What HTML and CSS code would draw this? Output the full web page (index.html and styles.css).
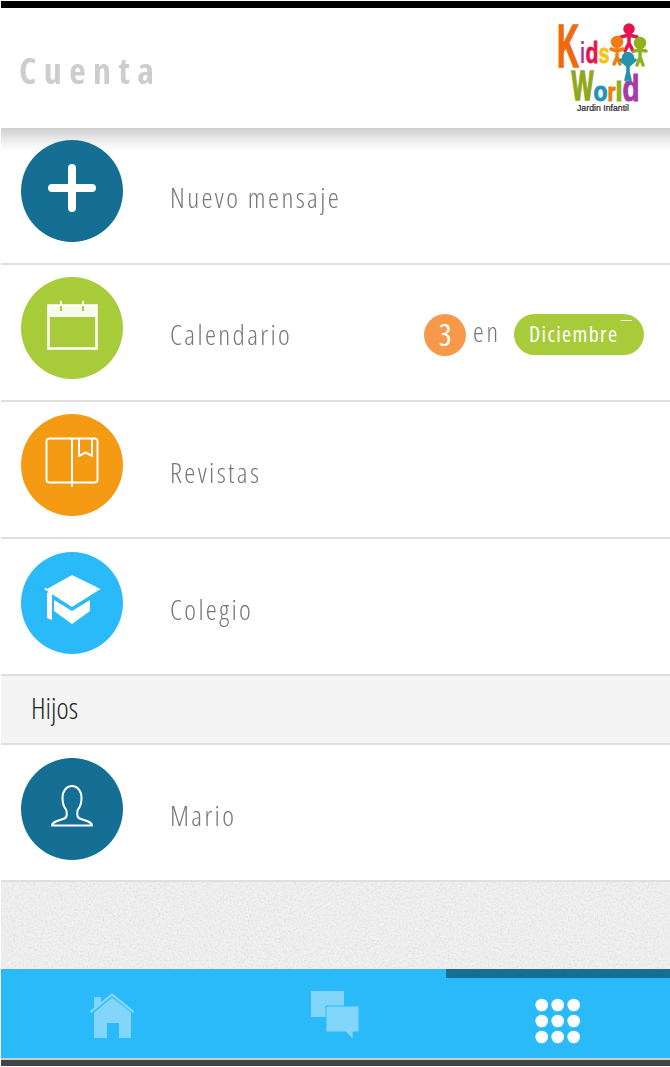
FILE: index.html
```html
<!DOCTYPE html>
<html lang="es">
<head>
<meta charset="utf-8">
<title>Cuenta</title>
<link rel="stylesheet" href="styles.css">
</head>
<body>
<div class="page">
  <div class="statusbar"></div>
  <header class="header">
    <h1 class="title">Cuenta</h1>
    <svg class="logo" viewBox="556 16 94 100" width="94" height="100">
      <text class="logo-word"><tspan x="557" y="67" font-size="62" textLength="22" lengthAdjust="spacingAndGlyphs" fill="#ee6a0c" stroke="#ee6a0c" stroke-width="1.500">K</tspan><tspan x="580" y="63" font-size="29" textLength="5" lengthAdjust="spacingAndGlyphs" fill="#a63a9e">i</tspan><tspan x="585.500" y="63" font-size="30" textLength="13" lengthAdjust="spacingAndGlyphs" fill="#e4144f" stroke="#e4144f" stroke-width="0.800">d</tspan><tspan x="598.500" y="63" font-size="28" textLength="11" lengthAdjust="spacingAndGlyphs" fill="#f7c30f" stroke="#f7c30f" stroke-width="0.800">s</tspan></text>
      <text class="logo-word"><tspan x="571.500" y="100" font-size="42" textLength="22" lengthAdjust="spacingAndGlyphs" fill="#8fa81a" stroke="#8fa81a" stroke-width="1.500">W</tspan><tspan x="593.500" y="101" font-size="27" textLength="14" lengthAdjust="spacingAndGlyphs" fill="#2293bd" stroke="#2293bd">o</tspan><tspan x="607.500" y="101" font-size="26" textLength="8" lengthAdjust="spacingAndGlyphs" fill="#ee7a14" stroke="#ee7a14">r</tspan><tspan x="615.500" y="101" font-size="28" textLength="7" lengthAdjust="spacingAndGlyphs" fill="#8fb21a" stroke="#8fb21a">l</tspan><tspan x="622.500" y="101" font-size="36" textLength="17" lengthAdjust="spacingAndGlyphs" fill="#a83aa8" stroke="#a83aa8">d</tspan></text>
      <g class="fig" stroke="#e4144f" fill="none"><circle cx="629" cy="29" r="4" fill="#e4144f"/><path d="M621 37l8-2 8 2M629 36v8M629 43l-4 8M629 43l4 8"/></g>
      <g class="fig" stroke="#f07d14" fill="none"><circle cx="617" cy="42" r="4.500" fill="#f07d14"/><path d="M611 49l6 2 6-2M617 49v9M617 57l-3 7M617 57l3 7"/></g>
      <g class="fig" stroke="#8fb21a" fill="none"><circle cx="640" cy="43" r="4.500" fill="#8fb21a"/><path d="M634 51l6-1 6 1M640 49v9M640 57l-3 8M640 57l3 8"/></g>
      <g class="fig" stroke="#2293a8" fill="none"><circle cx="628" cy="58" r="4.500" fill="#2293a8"/><path d="M621 60l7 6 7-6M628 64v9M628 72l-2 8M628 72l2 8"/></g>
      <text class="logo-sub" x="577" y="111" textLength="52" lengthAdjust="spacingAndGlyphs">Jardin Infantil</text>
    </svg>
  </header>

  <a class="row row-first">
    <span class="disc disc-teal">
      <svg viewBox="0 0 102 102"><path class="plus" d="M51 28v40M31 48h40"/></svg>
    </span>
    <span class="label">Nuevo mensaje</span>
  </a>

  <a class="row">
    <span class="disc disc-green">
      <svg viewBox="0 0 102 102"><rect class="band" x="27" y="28" width="49" height="12"/><rect class="line" x="27.500" y="28.500" width="48" height="43"/><path class="line thin" d="M40 24v5M62 24v5"/><path class="ring" d="M40 29v5M62 29v5"/></svg>
    </span>
    <span class="label">Calendario</span>
    <span class="extra">
      <span class="count">3</span>
      <span class="en">en</span>
      <span class="pill">Diciembre<i class="pill-dash"></i></span>
    </span>
  </a>

  <a class="row">
    <span class="disc disc-orange">
      <svg viewBox="0 0 102 102"><path class="line round book" d="M51 25v47M28.500 24.500h45a3 3 0 0 1 3 3v38a3 3 0 0 1-3 3h-45a3 3 0 0 1-3-3v-38a3 3 0 0 1 3-3zM58 25v17l6.500-3.500 6.500 3.500V25"/></svg>
    </span>
    <span class="label label-low">Revistas</span>
  </a>

  <a class="row row-low">
    <span class="disc disc-sky">
      <svg viewBox="0 0 102 102"><path class="solid" d="M51 23 79.500 37 51 55 23 37l3-1.500V37zM26 41l5-2v29l-5-2zM33 48l18 11 18-11v11L51 72 33 59z"/></svg>
    </span>
    <span class="label">Colegio</span>
  </a>

  <div class="section">Hijos</div>

  <a class="row row-low">
    <span class="disc disc-teal">
      <svg viewBox="0 0 102 102"><path class="line thin round" d="M31 67.500h40c0-4-7-5-12.500-7-3-1-2.500-7-1.500-9 2-2.500 3.500-7 3.500-11.500 0-7-4-12-9.500-12s-9.500 5-9.500 12c0 4.500 1.500 9 3.500 11.500 1 2 1.500 8-1.500 9-5.500 2-12.500 3-12.500 7z"/></svg>
    </span>
    <span class="label">Mario</span>
  </a>

  <div class="texture">
    <svg class="texture-svg" width="100%" height="100%">
      <filter id="grain"><feTurbulence type="fractalNoise" baseFrequency="0.55" numOctaves="3" seed="4"/><feColorMatrix type="matrix" values="0 0 0 0 0.6  0 0 0 0 0.6  0 0 0 0 0.6  0.7 0.7 0 0 -0.62"/></filter>
      <rect width="100%" height="100%" filter="url(#grain)"/>
    </svg>
  </div>

  <nav class="nav">
    <a class="nav-cell">
      <svg viewBox="87 991 50 50" width="50" height="50"><path class="nav-icon" d="M94 1012.500 112 997.500l19 15V1038h-12v-15h-12v15H94zM94 997h7v6l-7 6z"/><path class="nav-roof" d="M90.500 1012 112 994.500 133.500 1012"/></svg>
    </a>
    <a class="nav-cell">
      <svg viewBox="310 991 50 50" width="50" height="50"><path class="nav-icon" d="M311 991h33v26h-33z"/><path class="nav-icon nav-front" d="M326 1006h33v26h-6v8l-7-8h-20z"/></svg>
    </a>
    <a class="nav-cell nav-cell-active">
      <svg viewBox="533 996 50 50" width="50" height="50">
        <g class="dots">
          <circle cx="541.700" cy="1005" r="6.300"/><circle cx="557.700" cy="1005" r="6.300"/><circle cx="573.700" cy="1005" r="6.300"/>
          <circle cx="541.700" cy="1021" r="6.300"/><circle cx="557.700" cy="1021" r="6.300"/><circle cx="573.700" cy="1021" r="6.300"/>
          <circle cx="541.700" cy="1037" r="6.300"/><circle cx="557.700" cy="1037" r="6.300"/><circle cx="573.700" cy="1037" r="6.300"/>
        </g>
      </svg>
    </a>
  </nav>
  <div class="bottom-bar"></div>
</div>
</body>
</html>
```

FILE: styles.css
```css
* { box-sizing: border-box; }
html, body { margin: 0; padding: 0; background: #fff; }
body { font-family: "Open Sans", "Liberation Sans", sans-serif; }
.page { width: 670px; height: 1067px; padding: 1px 0 0 1px; overflow: hidden; display: flex; flex-direction: column; }
.statusbar { height: 7px; background: #000; flex: none; }
.header { height: 120px; flex: none; display: flex; align-items: flex-start; justify-content: space-between; padding: 8px 20px 0 18px; background: #fff; }
.title { margin: 37px 0 0; font-size: 36px; line-height: 1; font-weight: 700; font-stretch: 75%; letter-spacing: 7.400px; color: #cdcdcd; will-change: transform; }
.logo { display: block; overflow: visible; }
.logo-word { font-family: "Liberation Sans", sans-serif; font-weight: 700; }
.fig { stroke-width: 3.500; stroke-linecap: round; stroke-linejoin: round; }
.logo-sub { font-family: "Liberation Sans", sans-serif; font-size: 9px; font-weight: 400; stroke: #222; stroke-width: 0.200; fill: #222; }

.row { height: 137px; flex: none; display: flex; align-items: flex-start; padding: 12px 26px 0 20px; border-bottom: 2px solid #dfdfdf; background: #fff; }
.row-first { background: linear-gradient(#cfcfcf, #f4f4f4 16px, #fff 24px) no-repeat; }
.row-low { padding-top: 13px; }
.disc { width: 102px; height: 102px; border-radius: 50%; flex: none; display: block; }
.disc svg { display: block; width: 102px; height: 102px; }
.disc-teal { background: #156f95; }
.disc-green { background: #a8cb3a; }
.disc-orange { background: #f49a13; }
.disc-sky { background: #2abaf9; }
.plus { stroke: #fff; stroke-width: 8; stroke-linecap: round; fill: none; }
.line { stroke: #fff; stroke-width: 2.500; fill: none; }
.line.thin { stroke-width: 2; }
.line.round { stroke-linejoin: round; stroke-linecap: round; }
.line.book { stroke-width: 2; }
.band { fill: #f7fbe9; }
.ring { stroke: #a8cb3a; stroke-width: 2; fill: none; }
.solid { fill: #fff; }

.label { margin: 38px 0 0 47px; font-size: 28px; line-height: 38px; font-weight: 300; font-stretch: 75%; letter-spacing: 2.350px; color: #777; will-change: transform; }
.label-low { margin-top: 39px; }
.extra { margin: 37px 0 0 auto; display: flex; align-items: center; }
.count { width: 42px; height: 42px; border-radius: 50%; background: #f7984a; color: #fff; font-size: 30px; line-height: 42px; font-weight: 400; text-align: center; font-stretch: 75%; }
.en { margin: -6px 0 0 7px; font-size: 27px; line-height: 38px; font-weight: 300; font-stretch: 75%; letter-spacing: 2.800px; color: #777; will-change: transform; }
.pill { position: relative; margin: -2px 0 0 13px; width: 130px; height: 41px; border-radius: 21px; background: #a8cb3a; color: #fff; font-size: 22px; line-height: 39px; font-stretch: 75%; font-weight: 400; letter-spacing: 1.300px; padding-left: 15px; }
.pill-dash { position: absolute; left: 107px; top: 6px; width: 11px; height: 1px; background: #fff; }

.section { height: 69px; flex: none; padding: 13px 0 0 30px; background: #f4f4f4; border-bottom: 2px solid #dfdfdf; font-size: 29px; line-height: 38px; font-weight: 300; font-stretch: 75%; color: #222; }
.texture { flex: 1; background: #f0f0f0; min-height: 0; }
.texture-svg { display: block; }

.nav { height: 89px; flex: none; display: grid; grid-template-columns: 222px 223px 1fr; background: #2abaf9; }
.nav-cell { display: flex; justify-content: center; padding-top: 22px; }
.nav-cell svg { display: block; }
.nav-cell-active { border-top: 9px solid #156f95; padding-top: 18px; }
.nav-icon { fill: #82d5fb; }
.nav-front { stroke: #2abaf9; stroke-width: 1; }
.nav-roof { fill: none; stroke: #82d5fb; stroke-width: 2.500; }
.dots { fill: #fff; }
.bottom-bar { height: 8px; flex: none; background: #444; border-top: 2px solid #ccc; margin-bottom: 1px; }
```
